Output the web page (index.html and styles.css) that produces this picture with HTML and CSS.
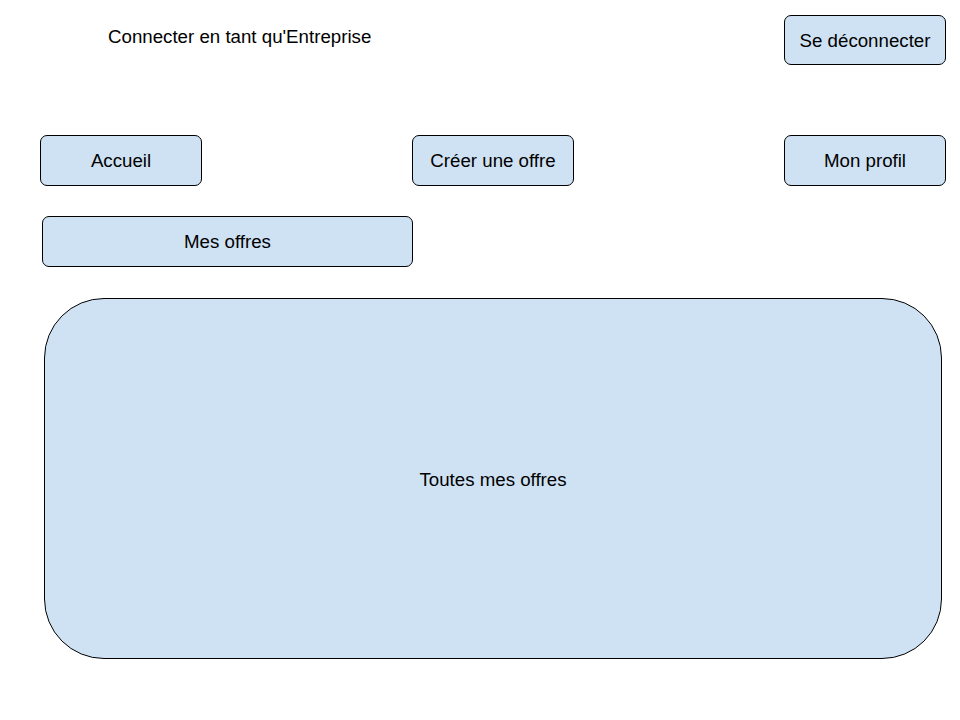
FILE: index.html
```html
<!DOCTYPE html>
<html lang="fr">
<head>
  <meta charset="UTF-8">
  <title>Espace Entreprise</title>
  <link rel="stylesheet" href="styles.css">
</head>
<body>
  <header class="top-bar">
    <p class="status">Connecter en tant qu'Entreprise</p>
    <button class="btn btn-logout">Se déconnecter</button>
  </header>

  <nav class="main-nav">
    <button class="btn">Accueil</button>
    <button class="btn">Créer une offre</button>
    <button class="btn">Mon profil</button>
  </nav>

  <button class="btn btn-wide">Mes offres</button>

  <section class="offers">
    Toutes mes offres
  </section>
</body>
</html>
```

FILE: styles.css
```css
* {
  margin: 0;
  padding: 0;
  box-sizing: border-box;
}
body {
  background-color: #fff;
  font-family: 'Liberation Sans', Arial, sans-serif;
  font-size: 18.7px;
  color: #000;
  width: 960px;
}
.top-bar {
  display: flex;
  justify-content: space-between;
  align-items: flex-start;
  padding: 15px 14px 0 108px;
}
.status {
  margin-top: 11px;
  line-height: 21px;
}
.btn {
  display: flex;
  align-items: center;
  justify-content: center;
  width: 162px;
  height: 51px;
  padding-top: 1px;
  background-color: #cfe2f3;
  border: 1px solid #000;
  border-radius: 7px;
  font-family: inherit;
  font-size: 18.7px;
  color: #000;
  cursor: pointer;
}
.btn-logout {
  height: 50px;
}
.main-nav {
  display: flex;
  justify-content: space-between;
  padding: 0 14px 0 40px;
  margin-top: 70px;
}
.btn-wide {
  width: 371px;
  margin: 30px 0 0 42px;
}
.offers {
  display: flex;
  align-items: center;
  justify-content: center;
  width: 898px;
  height: 361px;
  margin: 31px 0 0 44px;
  padding-top: 2px;
  background-color: #cfe2f3;
  border: 1px solid #000;
  border-radius: 60px;
}
```
